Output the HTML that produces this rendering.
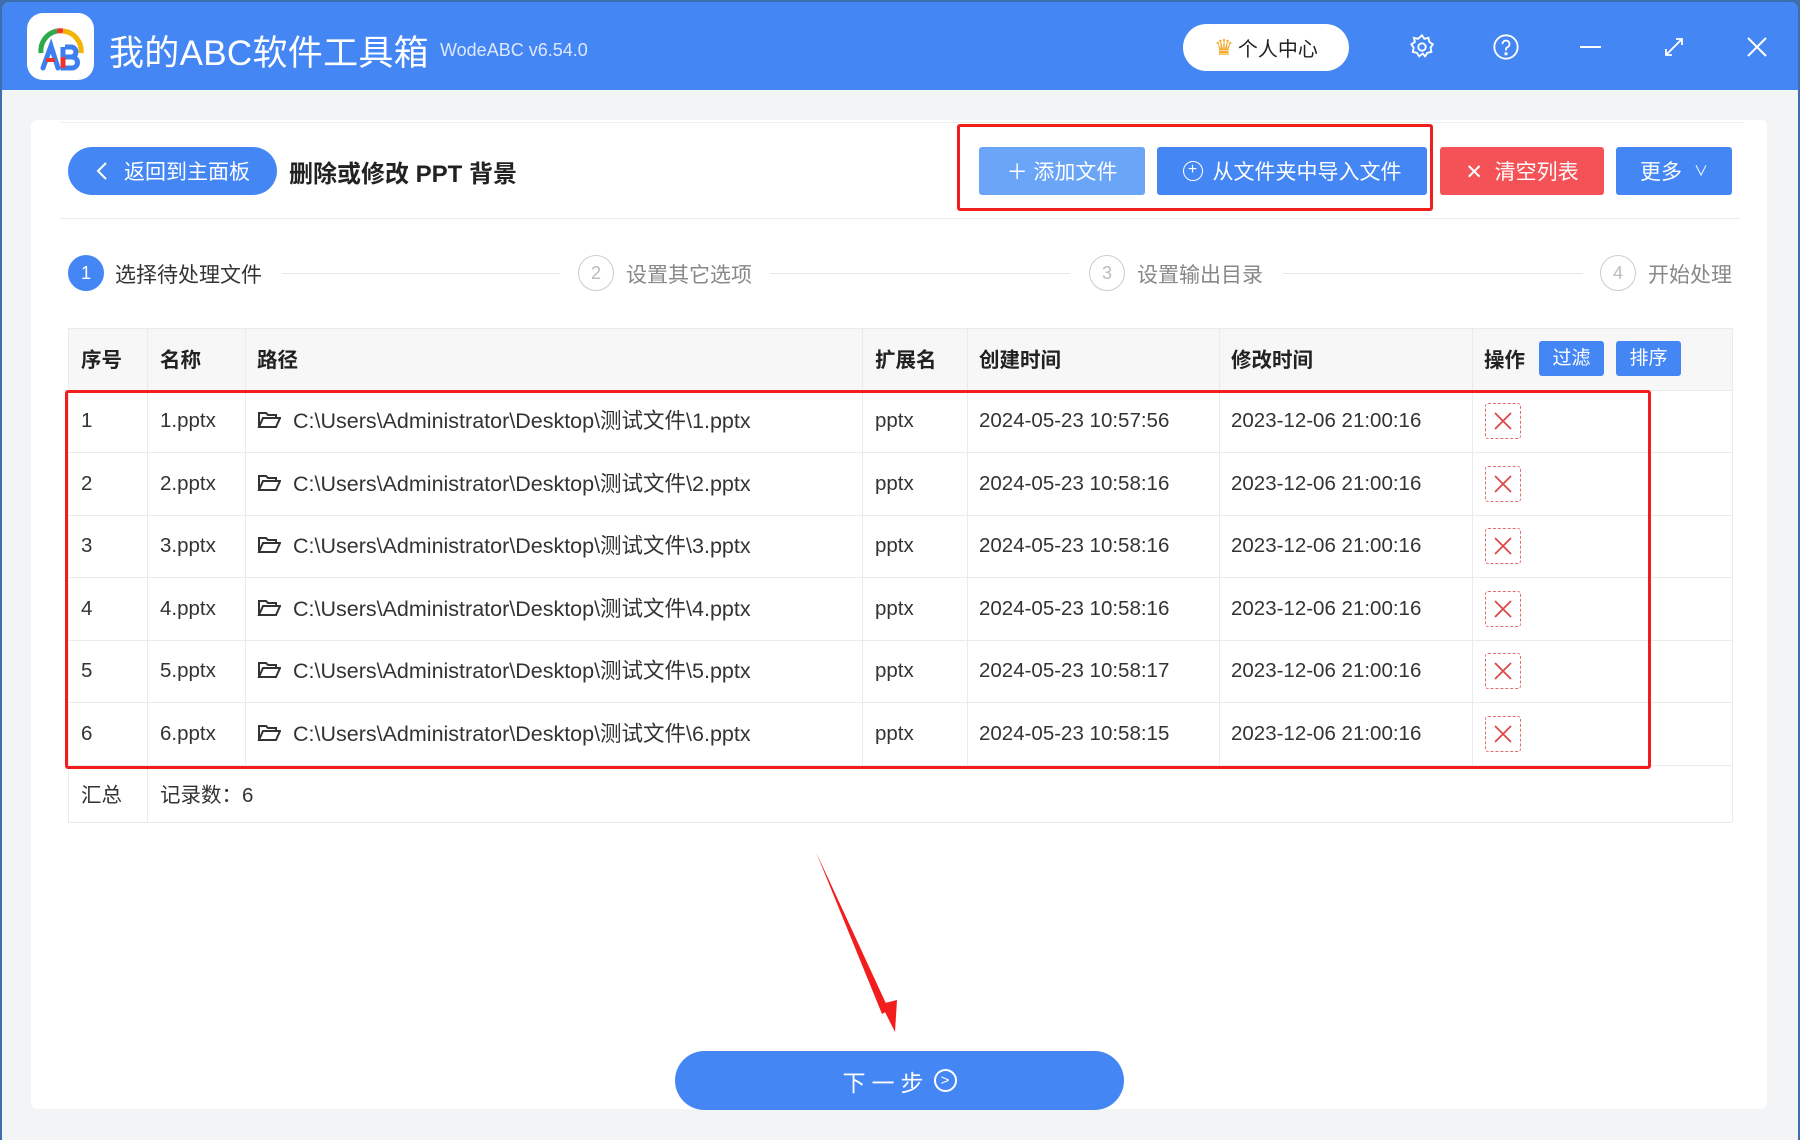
<!DOCTYPE html>
<html><head><meta charset="utf-8">
<style>
*{box-sizing:border-box;margin:0;padding:0}
body{width:1800px;height:1140px;overflow:hidden;background:#3d6fb0;font-family:"Liberation Sans","Noto Sans CJK SC",sans-serif;position:relative}
.win{position:absolute;left:2px;top:2px;width:1796px;height:1138px;background:#f3f4f6;border-radius:8px 8px 0 0;overflow:hidden}
.tb{position:absolute;left:0;top:0;width:100%;height:88px;background:#4487f4}
.abs{position:absolute}
.panel{position:absolute;left:31px;top:120px;width:1736px;height:989px;background:#fff;border-radius:6px}
.btn{position:absolute;top:147px;height:48px;color:#fff;font-size:21px;display:flex;align-items:center;justify-content:center;border-radius:3px}
.step{position:absolute;top:255px;width:36px;height:36px;border-radius:50%;border:1.5px solid #ccc;color:#bbb;font-size:18px;display:flex;align-items:center;justify-content:center}
.stxt{position:absolute;top:259px;font-size:21px;color:#888}
.line{position:absolute;top:273px;height:1px;background:#e6e6e6}
.cell{position:absolute;font-size:20.5px;color:#333;white-space:nowrap;height:62px;line-height:62px}
.hd{font-weight:bold;color:#222}
.vl{position:absolute;width:1px;background:#ebebeb}
.hl{position:absolute;height:1px;background:#ebebeb}
.del{position:absolute;left:1485px;width:36px;height:36px;border:1.5px dashed #e07070;border-radius:3px}
</style></head><body>
<div class="win">
<div class="tb"></div>
</div>
<div class="abs" style="left:27px;top:13px;width:67px;height:67px;background:#fff;border-radius:16px"></div>
<svg class="abs" style="left:27px;top:13px" width="67" height="67" viewBox="0 0 67 67">
<path d="M14 40 A20 20 0 0 1 30 18" stroke="#2daa4a" stroke-width="5" fill="none"/>
<path d="M30 18 A20 20 0 0 1 36 18" stroke="#e33" stroke-width="5" fill="none"/>
<path d="M36 18 A20 20 0 0 1 54 40" stroke="#f4b400" stroke-width="5" fill="none"/>
<path d="M16 55 L24 33 L31 55" stroke="#3b7ff0" stroke-width="5" fill="none" stroke-linecap="round"/>
<path d="M19 47 H28" stroke="#e33" stroke-width="4"/>
<path d="M36 34 V55 H45 A5.5 5.5 0 0 0 45 44 H38 M38 34 H44 A5 5 0 0 1 44 44" stroke="#3b7ff0" stroke-width="5" fill="none"/>
<path d="M36 44 V55" stroke="#e33" stroke-width="5"/>
</svg>
<div class="abs" style="left:109px;top:25px;font-size:35px;color:#fff;letter-spacing:0.3px">我的ABC软件工具箱</div>
<div class="abs" style="left:440px;top:40px;font-size:18px;color:#dde8ff">WodeABC v6.54.0</div>
<div class="abs" style="left:1183px;top:24px;width:166px;height:47px;background:#fff;border-radius:24px;font-size:20px;color:#222;display:flex;align-items:center;justify-content:center"><span style="color:#f5a623;font-size:22px;margin-right:4px">♛</span>个人中心</div>
<svg class="abs" style="left:1408px;top:33px" width="28" height="28" viewBox="0 0 24 24" fill="none" stroke="#fff" stroke-width="1.6"><circle cx="12" cy="12" r="3.2"/><path d="M12 2l2 3 3.5-.8.8 3.5 3 2-2 3 .8 3.5-3.5.8-2 3-2-2.3-3 2.3-2-3-3.5-.8.8-3.5-2-3 3-2-.8-3.5 3.5.8z"/></svg>
<svg class="abs" style="left:1492px;top:33px" width="28" height="28" viewBox="0 0 24 24" fill="none" stroke="#fff" stroke-width="1.6"><circle cx="12" cy="12" r="10"/><path d="M9 9.5a3 3 0 1 1 4 2.8c-.8.4-1 1-1 2v.7"/><circle cx="12" cy="17.8" r=".6" fill="#fff"/></svg>
<div class="abs" style="left:1580px;top:46px;width:21px;height:2px;background:#fff"></div>
<svg class="abs" style="left:1662px;top:35px" width="24" height="24" viewBox="0 0 24 24" stroke="#fff" stroke-width="1.8" fill="none"><path d="M4 20L20 4M14 4h6v6M4 14v6h6"/></svg>
<svg class="abs" style="left:1746px;top:36px" width="22" height="22" viewBox="0 0 22 22" stroke="#fff" stroke-width="2"><path d="M2 2L20 20M20 2L2 20"/></svg>

<div class="panel"></div>
<div class="abs" style="left:60px;top:122px;width:1684px;height:1px;background:#eee"></div>
<div class="abs" style="left:60px;top:218px;width:1680px;height:1px;background:#ececec"></div>
<div class="abs" style="left:68px;top:147px;width:209px;height:48px;background:#4487f4;border-radius:24px;color:#fff;font-size:21px;display:flex;align-items:center;padding-left:56px">返回到主面板</div>
<svg class="abs" style="left:95px;top:161px" width="14" height="20" viewBox="0 0 14 20" stroke="#fff" stroke-width="2" fill="none"><path d="M11 2L3 10l8 8"/></svg>
<div class="abs" style="left:289px;top:154px;font-size:24px;font-weight:bold;color:#222">删除或修改 PPT 背景</div>
<div class="btn" style="left:979px;width:166px;background:#6aa5f8">＋ 添加文件</div>
<div class="btn" style="left:1157px;width:270px;background:#4487f4"><span style="display:inline-block;width:20px;height:20px;border:1.5px solid #fff;border-radius:50%;font-size:16px;line-height:16px;text-align:center;margin-right:10px">+</span>从文件夹中导入文件</div>
<div class="btn" style="left:1440px;width:164px;background:#f55257">✕&nbsp; 清空列表</div>
<div class="btn" style="left:1616px;width:116px;background:#4487f4">更多 <span style="font-size:14px;margin-left:12px">∨</span></div>
<div class="abs" style="left:957px;top:124px;width:476px;height:87px;border:3px solid #f21d1d;border-radius:3px"></div>
<div class="step" style="left:68px;background:#4487f4;border-color:#4487f4;color:#fff">1</div>
<div class="stxt" style="left:115px;color:#333">选择待处理文件</div>
<div class="line" style="left:282px;width:278px"></div>
<div class="step" style="left:578px">2</div>
<div class="stxt" style="left:626px">设置其它选项</div>
<div class="line" style="left:770px;width:300px"></div>
<div class="step" style="left:1089px">3</div>
<div class="stxt" style="left:1137px">设置输出目录</div>
<div class="line" style="left:1283px;width:300px"></div>
<div class="step" style="left:1600px">4</div>
<div class="stxt" style="left:1648px">开始处理</div>
<div class="abs" style="left:68px;top:328px;width:1664px;height:62px;background:#f7f7f7"></div>
<div class="hl" style="left:68px;top:328px;width:1664px"></div>
<div class="hl" style="left:68px;top:390px;width:1664px"></div>
<div class="hl" style="left:68px;top:452px;width:1664px"></div>
<div class="hl" style="left:68px;top:515px;width:1664px"></div>
<div class="hl" style="left:68px;top:577px;width:1664px"></div>
<div class="hl" style="left:68px;top:640px;width:1664px"></div>
<div class="hl" style="left:68px;top:702px;width:1664px"></div>
<div class="hl" style="left:68px;top:765px;width:1664px"></div>
<div class="hl" style="left:68px;top:822px;width:1664px"></div>
<div class="vl" style="left:68px;top:328px;height:494px"></div>
<div class="vl" style="left:147px;top:328px;height:494px"></div>
<div class="vl" style="left:245px;top:328px;height:437px"></div>
<div class="vl" style="left:862px;top:328px;height:437px"></div>
<div class="vl" style="left:967px;top:328px;height:437px"></div>
<div class="vl" style="left:1219px;top:328px;height:437px"></div>
<div class="vl" style="left:1472px;top:328px;height:437px"></div>
<div class="vl" style="left:1732px;top:328px;height:494px"></div>
<div class="cell hd" style="left:81px;top:330px">序号</div>
<div class="cell hd" style="left:160px;top:330px">名称</div>
<div class="cell hd" style="left:257px;top:330px">路径</div>
<div class="cell hd" style="left:875px;top:330px">扩展名</div>
<div class="cell hd" style="left:979px;top:330px">创建时间</div>
<div class="cell hd" style="left:1231px;top:330px">修改时间</div>
<div class="cell hd" style="left:1484px;top:330px">操作</div>
<div class="abs" style="left:1539px;top:341px;width:65px;height:35px;background:#4487f4;border-radius:3px;color:#fff;font-size:19px;text-align:center;line-height:35px">过滤</div>
<div class="abs" style="left:1616px;top:341px;width:65px;height:35px;background:#4487f4;border-radius:3px;color:#fff;font-size:19px;text-align:center;line-height:35px">排序</div>

<div id="rows"></div>
<script>
var c=["2024-05-23 10:57:56","2024-05-23 10:58:16","2024-05-23 10:58:16","2024-05-23 10:58:16","2024-05-23 10:58:17","2024-05-23 10:58:15"];
var h="";
for(var i=0;i<6;i++){var t=390+i*62.5;var n=i+1;
h+='<div class="cell" style="left:81px;top:'+t+'px">'+n+'</div>'+
'<div class="cell" style="left:160px;top:'+t+'px">'+n+'.pptx</div>'+
'<svg class="abs" style="left:257px;top:'+(t+20)+'px" width="24" height="20" viewBox="0 0 24 20" fill="none" stroke="#333" stroke-width="2"><path d="M2 17V3h7l2 2h8v3M2 17l4-9h17l-4 9z"/></svg>'+
'<div class="cell" style="left:293px;top:'+t+'px;font-size:21.5px">C:\\Users\\Administrator\\Desktop\\测试文件\\'+n+'.pptx</div>'+
'<div class="cell" style="left:875px;top:'+t+'px">pptx</div>'+
'<div class="cell" style="left:979px;top:'+t+'px">'+c[i]+'</div>'+
'<div class="cell" style="left:1231px;top:'+t+'px">2023-12-06 21:00:16</div>'+
'<div class="del" style="top:'+(t+13)+'px"></div>'+
'<svg class="abs" style="left:1494px;top:'+(t+22)+'px" width="18" height="18" viewBox="0 0 18 18" stroke="#e04848" stroke-width="1.8"><path d="M1 1L17 17M17 1L1 17"/></svg>';}
document.getElementById('rows').innerHTML=h;
</script>
<div class="cell" style="left:81px;top:767px;height:58px;line-height:58px">汇总</div>
<div class="cell" style="left:160px;top:767px;height:58px;line-height:58px">记录数：6</div>
<div class="abs" style="left:65px;top:390px;width:1586px;height:379px;border:3.5px solid #f21d1d;border-radius:3px"></div>
<svg class="abs" style="left:0;top:0" width="1800" height="1140"><path d="M816 852 L889 1010 L882 1014 Z" fill="#f21d1d"/><path d="M881 1004 L895 1032 L897 1000 Z" fill="#f21d1d"/></svg>
<div class="abs" style="left:675px;top:1051px;width:449px;height:59px;background:#4487f4;border-radius:30px;color:#fff;font-size:23px;display:flex;align-items:center;justify-content:center;letter-spacing:6px">下一步<span style="display:inline-block;width:23px;height:23px;border:2px solid #fff;border-radius:50%;font-size:15px;line-height:19px;text-align:center;letter-spacing:0;margin-left:4px">&gt;</span></div>
</body></html>
